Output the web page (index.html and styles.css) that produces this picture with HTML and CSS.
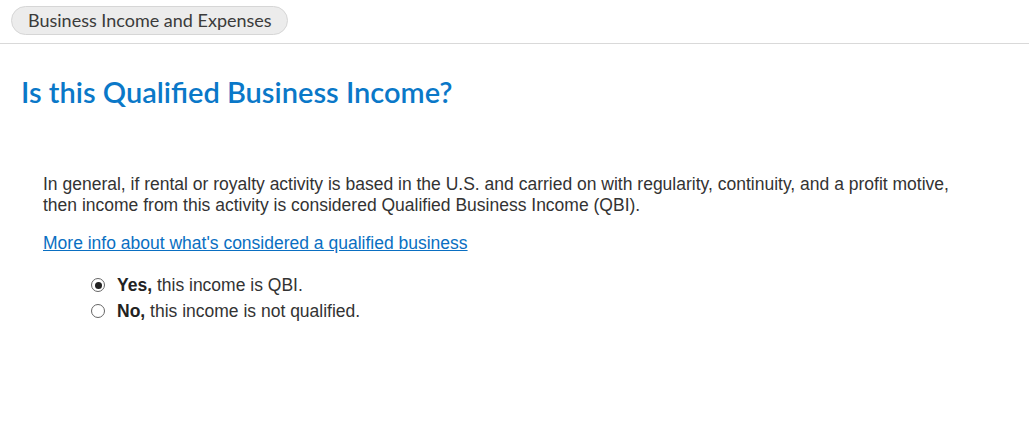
FILE: index.html
```html
<!DOCTYPE html>
<html>
<head>
<meta charset="utf-8">
<link rel="stylesheet" href="styles.css">
</head>
<body>
<header class="topbar">
  <span class="crumb">Business Income and Expenses</span>
</header>
<main class="content">
  <h1 class="title">Is this Qualified Business Income?</h1>
  <div class="body">
    <p class="desc">In general, if rental or royalty activity is based in the U.S. and carried on with regularity, continuity, and a profit motive, then income from this activity is considered Qualified Business Income (QBI).</p>
    <p class="more"><a href="#" class="link">More info about what's considered a qualified business</a></p>
    <div class="options">
      <label class="option"><span class="radio checked"></span><span><b>Yes,</b> this income is QBI.</span></label>
      <label class="option"><span class="radio"></span><span><b>No,</b> this income is not qualified.</span></label>
    </div>
  </div>
</main>
</body>
</html>
```
FILE: styles.css
```css
html, body {
  margin: 0;
  padding: 0;
  background: #fff;
}
body {
  width: 1029px;
  height: 448px;
  overflow: hidden;
}
.topbar {
  height: 44px;
  border-bottom: 1px solid #d9d9d9;
  box-sizing: border-box;
  padding: 6px 0 0 11px;
}
.crumb {
  display: inline-block;
  height: 29px;
  box-sizing: border-box;
  padding: 0 15px 0 16px;
  border: 1px solid #d6d6d6;
  border-radius: 15px;
  background: #ececec;
  font-family: "Lato", "Noto Sans", sans-serif;
  font-size: 18px;
  line-height: 27px;
  color: #3b3b3b;
}
.content {
  padding: 0 0 0 21px;
}
.title {
  margin: 31px 0 0 0;
  font-family: "Lato", "Noto Sans", sans-serif;
  font-weight: 600;
  font-size: 29px;
  line-height: 34px;
  color: #0a78c8;
}
.body {
  padding: 65px 0 0 22px;
  font-family: "Liberation Sans", Arial, sans-serif;
  font-size: 17.5px;
  color: #333;
}
.desc {
  margin: 0;
  line-height: 21px;
  width: 930px;
}
.more {
  margin: 17px 0 0 0;
  line-height: 21px;
}
.link {
  color: #0a6fc2;
  text-decoration: underline;
}
.options {
  margin: 21px 0 0 48px;
  display: flex;
  flex-direction: column;
  gap: 6px;
}
.option {
  display: flex;
  align-items: center;
  gap: 12px;
  line-height: 20px;
}
.radio {
  width: 14px;
  height: 14px;
  box-sizing: border-box;
  border: 1px solid #666;
  border-radius: 50%;
  background: #fff;
  display: flex;
  align-items: center;
  justify-content: center;
}
.radio.checked::after {
  content: "";
  width: 7px;
  height: 7px;
  border-radius: 50%;
  background: #222;
}
b {
  color: #222;
}
```
